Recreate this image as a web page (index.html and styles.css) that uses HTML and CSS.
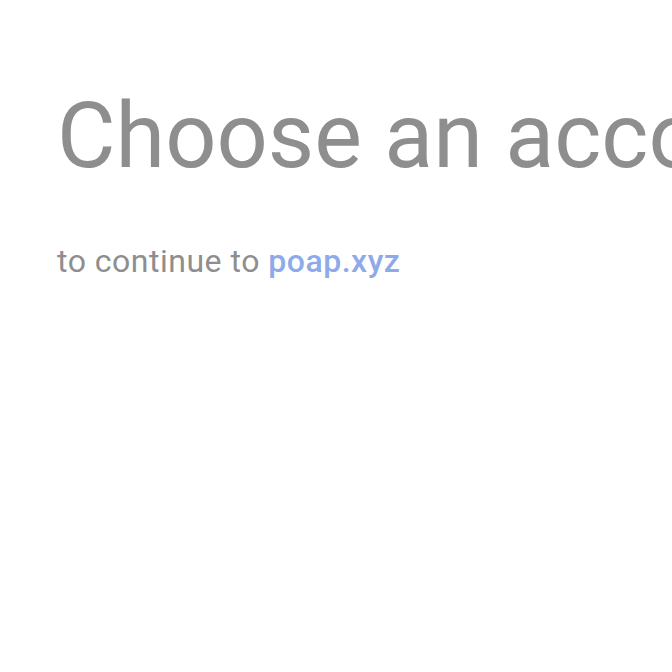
FILE: index.html
```html
<!DOCTYPE html>
<html lang="en">
<head>
    <meta charset="UTF-8">
    <meta name="viewport" content="width=device-width, initial-scale=1.0">
    <title>Choose an account</title>
    <link rel="stylesheet" href="styles.css">
</head>
<body>
    <div class="chooser">
        <h1 class="title">Choose an account</h1>
        <p class="subtitle">to continue to <a href="#">poap.xyz</a></p>
    </div>
</body>
</html>
```

FILE: styles.css
```css
:root {
    --text-muted: #8e8e8e;
    --link-color: #8eaaea;
}

html, body {
    margin: 0;
    padding: 0;
    overflow: hidden;
}

body {
    background: #ffffff;
    color: var(--text-muted);
    font-family: Roboto, 'Noto Sans', sans-serif;
    width: 672px;
    height: 672px;
}

.chooser {
    padding: 82px 0 0 57px;
}

.title {
    margin: 0;
    font-size: 90px;
    font-weight: 400;
    line-height: 110px;
    white-space: nowrap;
}

.subtitle {
    margin: 49px 0 0;
    font-size: 32px;
    letter-spacing: 0.5px;
    line-height: 40px;
    white-space: nowrap;
}

.subtitle a {
    color: var(--link-color);
    font-weight: 500;
    text-decoration: none;
}
```
